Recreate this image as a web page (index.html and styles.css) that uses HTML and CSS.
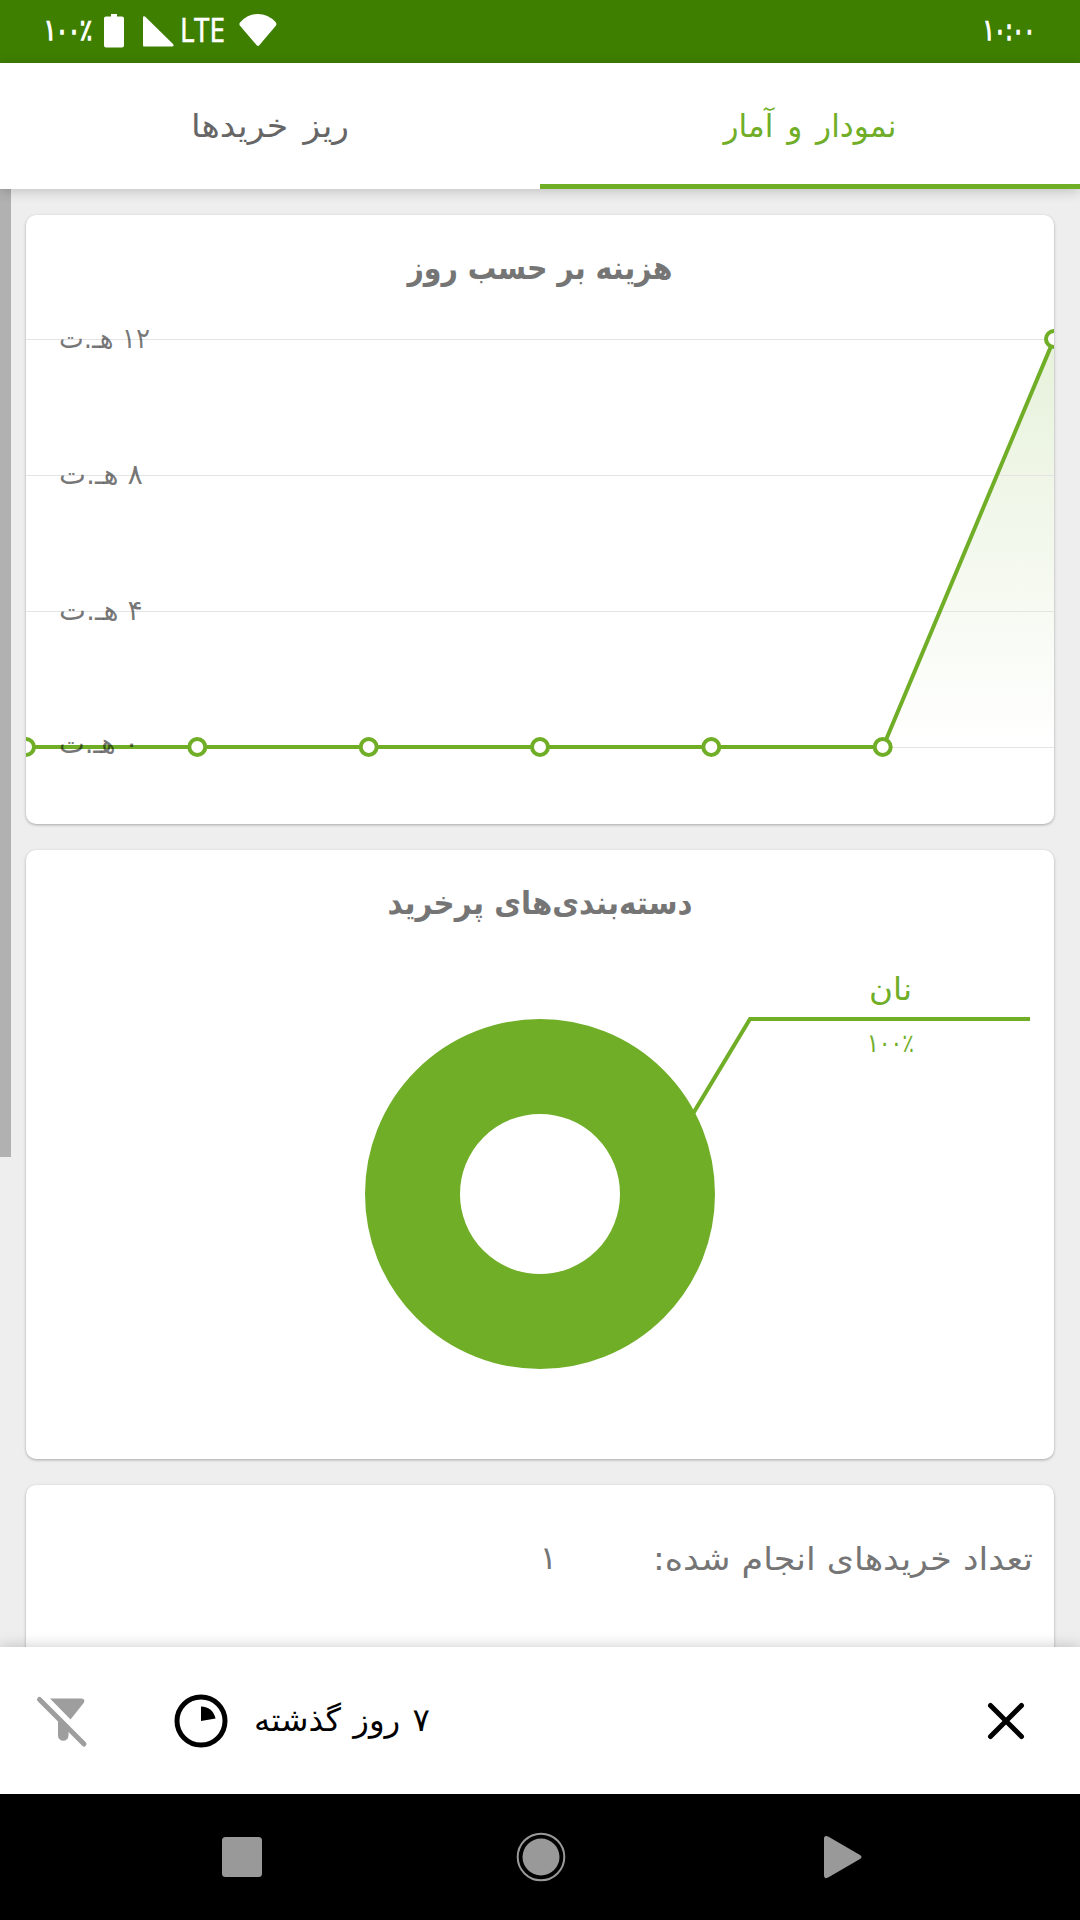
FILE: index.html
```html
<!DOCTYPE html>
<html lang="fa" dir="rtl">
<head>
<meta charset="utf-8">
<title>نمودار و آمار</title>
<link rel="stylesheet" href="styles.css">
</head>
<body>
<header class="status">
  <svg class="status-clock" width="60" height="63" viewBox="0 0 60 63"><text class="status-text" x="29" y="40" font-size="29" textLength="52" lengthAdjust="spacingAndGlyphs">۱۰:۰۰</text></svg>
  <div class="status-icons">
    <svg width="54" height="63" viewBox="0 0 54 63"><text class="status-text" x="28" y="40" font-size="29" textLength="48" lengthAdjust="spacingAndGlyphs">۱۰۰٪</text></svg>
    <svg width="20" height="63" viewBox="0 0 20 63"><path d="M7 14h6v2.500h5q2 0 2 2v27q0 2-2 2H2q-2 0-2-2v-27q0-2 2-2h5z"/></svg>
    <svg width="31" height="63" viewBox="0 0 31 63"><path d="M0 17.500q0-2 2-1L30 44q1.500 2.500-1 2.500H1q-1 0-1-1z"/></svg>
    <svg width="47" height="63" viewBox="0 0 47 63"><text class="lte" x="0" y="42" textLength="45" lengthAdjust="spacingAndGlyphs">LTE</text></svg>
    <svg width="38" height="63" viewBox="0 0 38 63"><path d="M.8 25.500Q-.3 23.500 1.500 22Q9 14 19 14T36.500 22Q38 23.500 37 25.500L20.500 45Q19 46.800 17.500 45z"/></svg>
  </div>
</header>
<nav class="tabs">
  <a class="tab active"><svg width="174" height="44" viewBox="0 0 174 44"><text x="87" y="32" textLength="173" lengthAdjust="spacingAndGlyphs">نمودار و آمار</text></svg></a>
  <a class="tab"><svg width="158" height="44" viewBox="0 0 158 44"><text x="79" y="32" textLength="158" lengthAdjust="spacingAndGlyphs">ریز خریدها</text></svg></a>
</nav>
<main class="content">
  <div class="scrollbar"></div>
  <section class="card">
    <h2><svg width="264" height="50" viewBox="0 0 264 50"><text x="132" y="39" textLength="265" lengthAdjust="spacingAndGlyphs">هزینه بر حسب روز</text></svg></h2>
    <svg class="chart" width="1028" height="509" viewBox="0 100 1028 509">
      <defs>
        <linearGradient id="area" x1="0" y1="0" x2="0" y2="1">
          <stop offset="0" stop-color="#70ae28" stop-opacity=".17"/>
          <stop offset="1" stop-color="#70ae28" stop-opacity="0"/>
        </linearGradient>
      </defs>
      <path d="M857 532L1028 124V532z" fill="url(#area)"/>
      <path class="grid" d="M0 124.500H1028M0 260.500H1028M0 396.500H1028M0 532.500H1028"/>
      <polyline class="line" points="0,532 857,532 1028,124"/>
      <g class="dots">
        <circle cx="0" cy="532" r="8"/><circle cx="171.300" cy="532" r="8"/><circle cx="342.700" cy="532" r="8"/><circle cx="514" cy="532" r="8"/><circle cx="685.300" cy="532" r="8"/><circle cx="856.700" cy="532" r="8"/><circle cx="1028" cy="124" r="8"/>
      </g>
      <g class="ticks">
        <text x="124" y="133" textLength="91" lengthAdjust="spacingAndGlyphs">۱۲ هـ.ت</text>
        <text x="117" y="269" textLength="84" lengthAdjust="spacingAndGlyphs">۸ هـ.ت</text>
        <text x="117" y="405" textLength="84" lengthAdjust="spacingAndGlyphs">۴ هـ.ت</text>
        <text x="113" y="538" textLength="80" lengthAdjust="spacingAndGlyphs">۰ هـ.ت</text>
      </g>
    </svg>
  </section>
  <section class="card">
    <h2><svg width="304" height="50" viewBox="0 0 304 50"><text x="152" y="39" textLength="305" lengthAdjust="spacingAndGlyphs">دسته‌بندی‌های پرخرید</text></svg></h2>
    <svg class="chart" width="1028" height="509" viewBox="0 100 1028 509">
      <circle class="donut" cx="514" cy="344" r="127.500"/>
      <path class="line" d="M661 273.600L724 169H1004"/>
      <text class="slice-name" x="864.500" y="150" textLength="43" lengthAdjust="spacingAndGlyphs">نان</text>
      <text class="slice-value" x="864.500" y="202" textLength="47" lengthAdjust="spacingAndGlyphs">۱۰۰٪</text>
    </svg>
  </section>
  <section class="card summary">
    <svg class="summary-label" width="380" height="48" viewBox="0 0 380 48"><text x="380" y="35" textLength="380" lengthAdjust="spacingAndGlyphs">تعداد خریدهای انجام شده:</text></svg>
    <span class="summary-value">۱</span>
  </section>
</main>
<footer class="filter">
  <svg class="close" width="36" height="36" viewBox="0 0 36 36"><path d="M2.500 2.500L33.500 33.500M33.500 2.500L2.500 33.500"/></svg>
  <svg class="period" width="176" height="48" viewBox="0 0 176 48"><text x="176" y="34" textLength="176" lengthAdjust="spacingAndGlyphs">۷ روز گذشته</text></svg>
  <svg class="pie" width="54" height="54" viewBox="0 0 54 54"><circle cx="27" cy="27" r="24"/><path d="M27 27V12.500Q39 13 41.500 24.500z"/></svg>
  <svg class="funnel" width="52" height="52" viewBox="0 0 52 52"><path class="slash" d="M4.500 4.500L49 49"/><path d="M15 3.500H46.500Q50.500 4 49 7.500L35.500 24.500zM23 20L33.500 32V40.500A5.250 5.250 0 0 1 23 40.500z"/></svg>
</footer>
<div class="navbar">
  <svg width="40" height="44" viewBox="0 0 40 44"><path d="M1 4Q1 -1 6 2L37 20Q40 22 37 24L6 42Q1 45 1 40z"/></svg>
  <svg width="50" height="50" viewBox="0 0 50 50"><circle cx="25" cy="25" r="18.500"/><circle class="ring" cx="25" cy="25" r="23.300"/></svg>
  <svg width="40" height="40" viewBox="0 0 40 40"><rect width="40" height="40" rx="3.500"/></svg>
</div>
</body>
</html>
```
FILE: styles.css
```css
* { box-sizing: border-box; }
body {
  margin: 0;
  width: 1080px;
  height: 1920px;
  display: flex;
  flex-direction: column;
  overflow: hidden;
  background: #eee;
  color: #757575;
  font-family: "DejaVu Sans", sans-serif;
}
svg { display: block; flex: none; overflow: visible; }
.status {
  height: 63px;
  flex: none;
  display: flex;
  justify-content: space-between;
  padding: 0 40px;
  background: #3e7f00;
  fill: #fff;
}
.status-icons { display: flex; direction: ltr; }
.status-icons svg:nth-child(2) { margin-left: 10px; }
.status-icons svg:nth-child(3) { margin-left: 19px; }
.status-icons svg:nth-child(4) { margin-left: 6px; }
.status-icons svg:nth-child(5) { margin-left: 12px; }
.status-text { text-anchor: middle; stroke: #fff; stroke-width: 1.500px; }
.lte { font: 32px "Noto Sans", sans-serif; stroke: #fff; stroke-width: .5px; }
.tabs {
  position: relative;
  z-index: 2;
  height: 126px;
  flex: none;
  display: flex;
  background: #fff;
  box-shadow: 0 2px 12px rgba(0, 0, 0, .2);
}
.tab {
  flex: 1;
  display: flex;
  align-items: center;
  justify-content: center;
  font-size: 32px;
  word-spacing: 4px;
  fill: #666;
  padding-top: 7px;
  border-bottom: 5px solid transparent;
}
.tab text { text-anchor: middle; }
.tab.active { fill: #70ae28; border-color: #70ae28; }
.content {
  position: relative;
  flex: 1;
  min-height: 0;
  overflow: hidden;
  display: flex;
  flex-direction: column;
  gap: 26px;
  padding: 26px 26px 0;
}
.scrollbar {
  position: absolute;
  left: 0;
  top: 0;
  width: 11px;
  height: 968px;
  background: #b1b1b1;
}
.card {
  height: 609px;
  flex: none;
  overflow: hidden;
  border-radius: 10px;
  background: #fff;
  box-shadow: 0 1px 3px rgba(0, 0, 0, .3);
}
.card h2 {
  height: 100px;
  margin: 0;
  display: flex;
  align-items: center;
  justify-content: center;
  fill: #757575;
  font-size: 32px;
  font-weight: bold;
}
.card h2 text { text-anchor: middle; }
.chart { direction: rtl; overflow: hidden; }
.grid { stroke: #e4e4e4; stroke-width: 1; }
.line { fill: none; stroke: #70ae28; stroke-width: 4; }
.dots { fill: #fff; stroke: #70ae28; stroke-width: 4; }
.ticks { fill: rgba(0, 0, 0, .54); font-size: 28px; }
.donut { fill: none; stroke: #70ae28; stroke-width: 95; }
.slice-name { fill: #70ae28; font-size: 31px; text-anchor: middle; }
.slice-value { fill: #70ae28; font-size: 26px; text-anchor: middle; }
.summary {
  display: flex;
  padding: 50px 21px;
  fill: #757575;
  font-size: 32px;
  line-height: 46px;
}
.summary-label { margin-left: 96px; }
.filter {
  position: relative;
  z-index: 2;
  height: 147px;
  flex: none;
  display: flex;
  align-items: center;
  padding: 0 56px 0 35px;
  background: #fff;
  box-shadow: 0 0 14px rgba(0, 0, 0, .22);
}
.close { fill: none; stroke: #000; stroke-width: 5px; stroke-linecap: round; }
.period { margin-right: auto; font-size: 32px; word-spacing: 2px; }
.pie { margin-right: 26px; }
.pie circle { fill: none; stroke: #000; stroke-width: 5px; }
.funnel { margin-right: 87px; fill: #9e9e9e; }
.slash { stroke: #9e9e9e; stroke-width: 5px; stroke-linecap: round; }
.navbar {
  height: 126px;
  flex: none;
  display: flex;
  align-items: center;
  justify-content: space-between;
  padding: 0 222px;
  background: #000;
  fill: #999;
}
.navbar svg:first-child { margin-right: -5px; }
.navbar svg:nth-child(2) { margin: 0 2px 0 -2px; }
.ring { fill: none; stroke: #999; stroke-width: 2px; }
```
